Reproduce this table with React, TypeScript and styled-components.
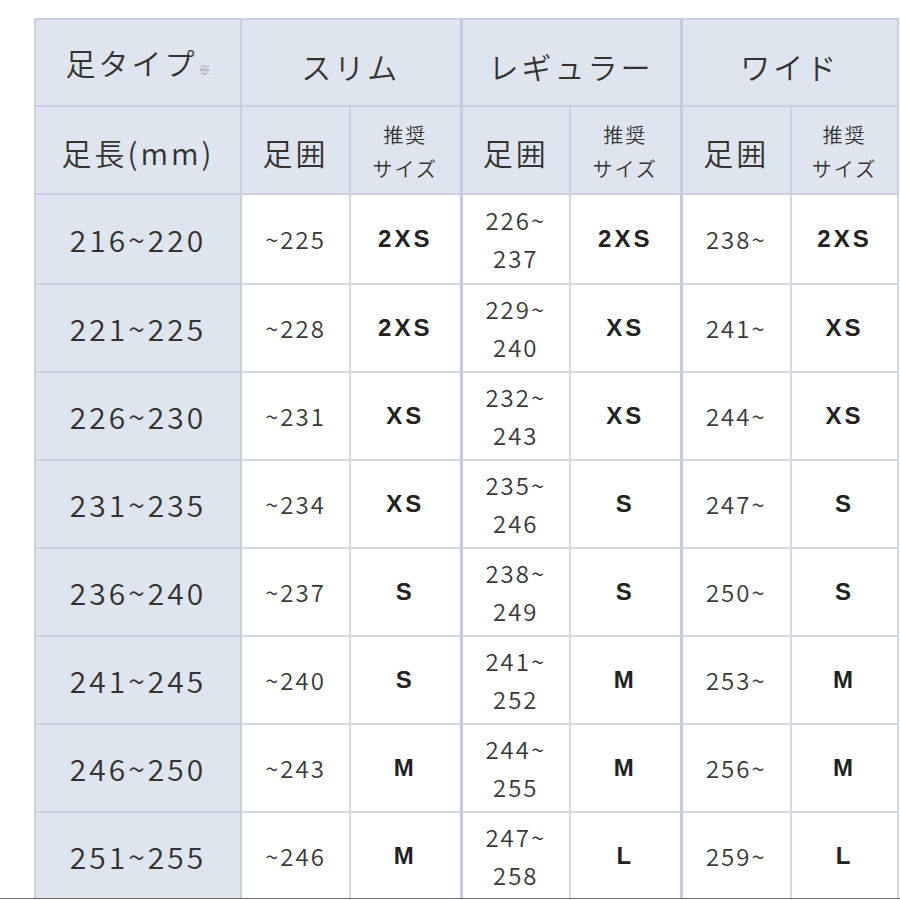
import React from 'react';
import styled, { createGlobalStyle } from 'styled-components';

const GlobalStyle = createGlobalStyle`
  html, body {
    margin: 0;
    padding: 0;
    background: #ffffff;
  }
  body {
    font-family: "Noto Sans CJK JP", "Noto Sans", sans-serif;
    color: #333333;
  }
`;

const Page = styled.div`
  width: 900px;
  height: 899px;
  overflow: hidden;
  border-bottom: 1px solid #6b6b6b;
  padding: 18px 0 0 34px;
  box-sizing: border-box;
`;

const SizeTable = styled.table`
  width: 863px;
  table-layout: fixed;
  border-collapse: collapse;
  border: 2px solid #c9d1e0;
`;

const HeadRow = styled.tr<{ h: number }>`
  height: ${({ h }) => h}px;
`;

const BodyRow = styled.tr<{ h: number }>`
  height: ${({ h }) => h}px;
`;

const HeadCell = styled.th<{ small?: boolean; groupEdge?: boolean; shift?: number }>`
  background: #dfe5ee;
  border: 2px solid #c9d1e0;
  ${({ groupEdge }) => groupEdge && 'border-left: 3px solid #c2cbdf;'}
  padding: ${({ shift = 0 }) => `${shift}px 0 0`};
  text-align: center;
  vertical-align: middle;
  font-weight: 350;
  color: #333333;
  font-size: ${({ small }) => (small ? '20px' : '30px')};
  letter-spacing: ${({ small }) => (small ? '2px' : '3px')};
  line-height: ${({ small }) => (small ? '34px' : '40px')};
`;

const SideCell = styled.th`
  background: #dfe5ee;
  border: 2px solid #c9d1e0;
  padding: 0;
  text-align: center;
  vertical-align: middle;
  font-weight: 350;
  color: #333333;
  font-size: 30px;
  letter-spacing: 3px;
`;

const Mark = styled.span`
  font-size: 12px;
  letter-spacing: 0;
  color: #8a8a8a;
  margin-left: 1px;
`;

const DataCell = styled.td<{ bold?: boolean; groupEdge?: boolean }>`
  background: #ffffff;
  border: 2px solid #d3d9e5;
  ${({ groupEdge }) => groupEdge && 'border-left: 3px solid #c2cbdf;'}
  padding: 0;
  text-align: center;
  vertical-align: middle;
  font-size: 24px;
  line-height: 38px;
  letter-spacing: ${({ bold }) => (bold ? '3px' : '2px')};
  font-family: ${({ bold }) =>
    bold ? '"Liberation Sans", "Noto Sans CJK JP", sans-serif' : 'inherit'};
  font-weight: ${({ bold }) => (bold ? 700 : 350)};
  color: ${({ bold }) => (bold ? '#222222' : '#383838')};
`;

type Row = [string, string, string, string, string, string, string];

const rows: Row[] = [
  ['216~220', '~225', '2XS', '226~|237', '2XS', '238~', '2XS'],
  ['221~225', '~228', '2XS', '229~|240', 'XS', '241~', 'XS'],
  ['226~230', '~231', 'XS', '232~|243', 'XS', '244~', 'XS'],
  ['231~235', '~234', 'XS', '235~|246', 'S', '247~', 'S'],
  ['236~240', '~237', 'S', '238~|249', 'S', '250~', 'S'],
  ['241~245', '~240', 'S', '241~|252', 'M', '253~', 'M'],
  ['246~250', '~243', 'M', '244~|255', 'M', '256~', 'M'],
  ['251~255', '~246', 'M', '247~|258', 'L', '259~', 'L'],
];

const colWidths = [206, 109, 111, 109, 111, 110, 107];

const Lines = ({ text }: { text: string }) => {
  const parts = text.split('|');
  return (
    <>
      {parts.map((p, i) => (
        <React.Fragment key={i}>
          {i > 0 && <br />}
          {p}
        </React.Fragment>
      ))}
    </>
  );
};

const App = () => {
  return (
    <>
      <GlobalStyle />
      <Page>
        <SizeTable>
          <colgroup>
            {colWidths.map((w, i) => (
              <col key={i} style={{ width: w }} />
            ))}
          </colgroup>
          <thead>
            <HeadRow h={87}>
              <HeadCell shift={6}>
                足タイプ<Mark>※</Mark>
              </HeadCell>
              <HeadCell colSpan={2} shift={6}>
                スリム
              </HeadCell>
              <HeadCell colSpan={2} groupEdge shift={6}>
                レギュラー
              </HeadCell>
              <HeadCell colSpan={2} groupEdge shift={6}>
                ワイド
              </HeadCell>
            </HeadRow>
            <HeadRow h={88}>
              <HeadCell shift={3}>足長(mm)</HeadCell>
              <HeadCell shift={3}>足囲</HeadCell>
              <HeadCell small shift={3}>
                推奨
                <br />
                サイズ
              </HeadCell>
              <HeadCell groupEdge shift={3}>
                足囲
              </HeadCell>
              <HeadCell small shift={3}>
                推奨
                <br />
                サイズ
              </HeadCell>
              <HeadCell groupEdge shift={3}>
                足囲
              </HeadCell>
              <HeadCell small shift={3}>
                推奨
                <br />
                サイズ
              </HeadCell>
            </HeadRow>
          </thead>
          <tbody>
            {rows.map((r, i) => (
              <BodyRow key={r[0]} h={i === 0 ? 90 : 88}>
                <SideCell>{r[0]}</SideCell>
                <DataCell>{r[1]}</DataCell>
                <DataCell bold>{r[2]}</DataCell>
                <DataCell groupEdge>
                  <Lines text={r[3]} />
                </DataCell>
                <DataCell bold>{r[4]}</DataCell>
                <DataCell groupEdge>{r[5]}</DataCell>
                <DataCell bold>{r[6]}</DataCell>
              </BodyRow>
            ))}
          </tbody>
        </SizeTable>
      </Page>
    </>
  );
};

export default App;
